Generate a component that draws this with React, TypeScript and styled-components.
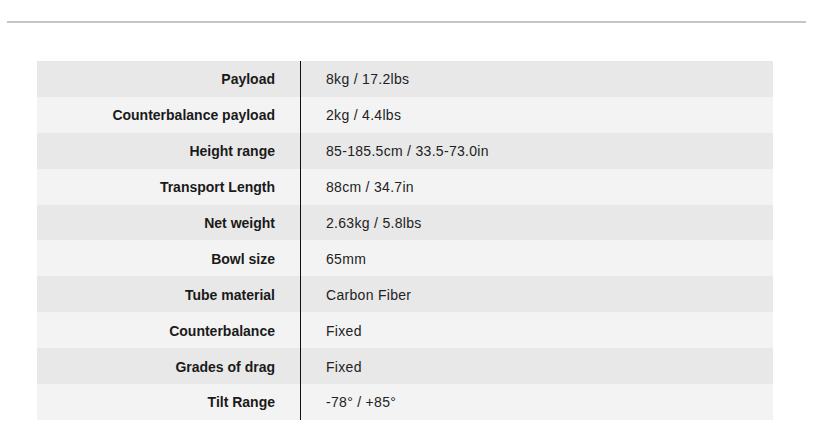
import React from "react";
import styled, { createGlobalStyle } from "styled-components";

const Global = createGlobalStyle`
  html, body { margin: 0; padding: 0; background: #ffffff; }
  body { font-family: "Liberation Sans", Arial, Helvetica, sans-serif; color: #1c1c1c; }
`;

const Page = styled.div`
  display: flex;
  flex-direction: column;
  padding-top: 21px;
`;

const Rule = styled.hr`
  margin: 0 11px 0 7px;
  height: 2px;
  border: 0;
  background: #c6c6c6;
`;

const Table = styled.div`
  display: flex;
  flex-direction: column;
  margin: 38px 44px 0 37px;
`;

const Row = styled.div<{ $alt: boolean }>`
  display: grid;
  grid-template-columns: 264px 1fr;
  height: 35.9px;
  background: ${(p) => (p.$alt ? "#f3f3f3" : "#e8e8e8")};
`;

const Label = styled.div`
  display: flex;
  align-items: center;
  justify-content: flex-end;
  padding: 1px 25px 0 0;
  font-weight: 700;
  font-size: 14px;
  color: #1a1a1a;
  border-right: 1px solid #111111;
`;

const Value = styled.div`
  display: flex;
  align-items: center;
  padding: 1px 0 0 25px;
  font-size: 14px;
  letter-spacing: 0.3px;
  color: #222222;
`;

const specs: [string, string][] = [
  ["Payload", "8kg / 17.2lbs"],
  ["Counterbalance payload", "2kg / 4.4lbs"],
  ["Height range", "85-185.5cm / 33.5-73.0in"],
  ["Transport Length", "88cm / 34.7in"],
  ["Net weight", "2.63kg / 5.8lbs"],
  ["Bowl size", "65mm"],
  ["Tube material", "Carbon Fiber"],
  ["Counterbalance", "Fixed"],
  ["Grades of drag", "Fixed"],
  ["Tilt Range", "-78° / +85°"],
];

export default function App() {
  return (
    <Page>
      <Global />
      <Rule />
      <Table>
        {specs.map(([k, v], i) => (
          <Row key={k} $alt={i % 2 === 1}>
            <Label>{k}</Label>
            <Value>{v}</Value>
          </Row>
        ))}
      </Table>
    </Page>
  );
}
